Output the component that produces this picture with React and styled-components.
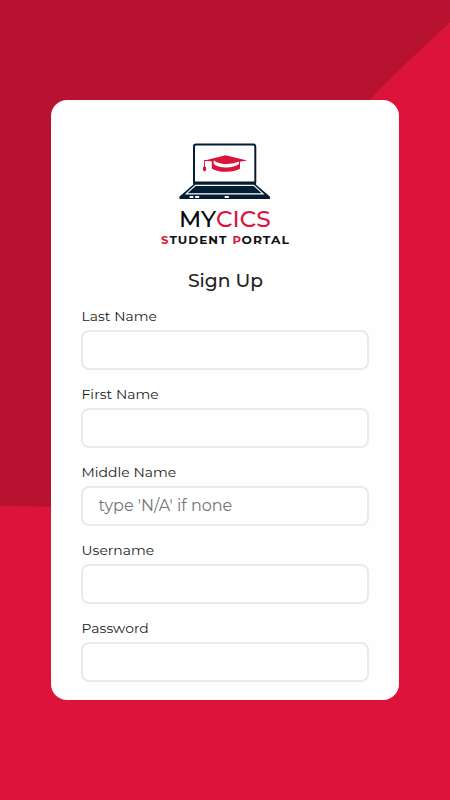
import React from "react";
import styled, { createGlobalStyle } from "styled-components";

const GlobalStyle = createGlobalStyle`
  * { box-sizing: border-box; }
  body { margin: 0; background: #dc143c; font-family: Montserrat, Inter, sans-serif; }
`;

const Page = styled.main`
  position: relative;
  height: 800px;
  overflow: hidden;
  display: flex;
  align-items: center;
  justify-content: center;
  background: #dc143c;
`;

const Backdrop = styled.svg`
  position: absolute;
  inset: 0;
  width: 450px;
  height: 800px;
`;

const Card = styled.form`
  position: relative;
  width: 348px;
  height: 600px;
  padding: 20px 30px 0;
  overflow: hidden;
  border-radius: 16px;
  background: #fefefe;
`;

const Logo = styled.svg`
  display: block;
  width: 150px;
  height: 150px;
  margin: 0 auto;
  font-family: Montserrat, Inter, sans-serif;
`;

const Title = styled.h3`
  margin: -1px 0 0 1px;
  font-size: 18.72px;
  line-height: 24px;
  font-weight: 550;
  text-align: center;
  color: #222;
`;

const Fields = styled.div`
  display: grid;
  gap: 14px;
  margin-top: 13px;
`;

const Field = styled.label`
  display: flex;
  flex-direction: column;
  height: 64px;
`;

const Caption = styled.span`
  height: 24px;
  padding-left: 0.5px;
  font-size: 13.9px;
  line-height: 21px;
  letter-spacing: 0.05px;
  color: #222;
`;

const Input = styled.input`
  width: 288px;
  height: 40px;
  padding: 0 15px 1px 15.5px;
  border: 2px solid #eaeaea;
  border-radius: 8px;
  outline: none;
  background: #fff;
  font: 400 16px Montserrat, Inter, sans-serif;
  color: #222;
  &::placeholder { color: #757575; opacity: 1; }
`;

const FIELDS = [
  { label: "Last Name" },
  { label: "First Name" },
  { label: "Middle Name", placeholder: "type 'N/A' if none" },
  { label: "Username" },
  { label: "Password", type: "password" },
];

function PortalLogo() {
  return (
    <Logo viewBox="150 120 150 150" role="img" aria-label="MyCICS Student Portal">
      <rect x="194" y="144.4" width="61.3" height="40" rx="2" fill="#fff" stroke="#051d33" strokeWidth="2" />
      <path d="M193.4 181.5h62.5v3l14.2 12.3v1.1q0 1.2-1.4 1.2H180.8q-1.5 0-1.5-1.2v-1.1l14.1-12.3z" fill="#051d33" />
      <path d="M186.2 193.9l9.2-8.5h58.4l9.3 8.5z" fill="none" stroke="#fff" strokeWidth="1.1" />
      <g fill="#fff">
        <rect x="189.6" y="195.9" width="3.7" height="2.2" rx=".5" />
        <rect x="195" y="195.9" width="4.2" height="2.2" rx=".5" />
        <rect x="224.6" y="195.9" width="4.3" height="2.2" rx=".5" />
      </g>
      <g fill="#dc143c">
        <path d="M225.5 155.2L247.2 160.4L240 161.8V168.8Q235 171.8 226 171.8Q217 171.8 211.8 168.7V161.6L204.5 160.4Z" />
        <path d="M204 160.1H212V160.9H204.9V166.2Q206.3 167 206.3 168.8Q206.2 171 204.5 171.4Q202.8 171 202.8 168.8Q202.8 167 204 166.2Z" />
      </g>
      <path d="M213.7 160.2Q219 164.3 226.5 163.9Q234 164 239 161.5V164.1Q234 167.6 226 167.5Q217.5 167.2 213.7 163.9Z" fill="#fff" />
      <text y="227.4" fontSize="23" fontWeight="500" fill="#080808">
        <tspan x="179" textLength="37" lengthAdjust="spacingAndGlyphs">MY</tspan>
        <tspan x="216" textLength="54.8" lengthAdjust="spacingAndGlyphs" fill="#dc143c">CICS</tspan>
      </text>
      <text y="244.1" fontSize="11.6" fontWeight="700" letterSpacing="1" fill="#111">
        <tspan x="160.9" fill="#dc143c">S</tspan>
        <tspan x="169.5" textLength="58" lengthAdjust="spacingAndGlyphs">TUDENT</tspan>
        <tspan x="232.5" fill="#dc143c">P</tspan>
        <tspan x="241.5" textLength="48.5" lengthAdjust="spacingAndGlyphs">ORTAL</tspan>
      </text>
    </Logo>
  );
}

export default function App() {
  return (
    <>
      <GlobalStyle />
      <Page>
        <Backdrop viewBox="0 0 450 800" aria-hidden="true">
          <path d="M0 0H450V22.5Q398 70 369.5 100Q300 190 250 360Q210 520 51 506.7L0 505.7Z" fill="#b71230" />
        </Backdrop>
        <Card>
          <PortalLogo />
          <Title>Sign Up</Title>
          <Fields>
            {FIELDS.map(({ label, type = "text", placeholder }) => (
              <Field key={label}>
                <Caption>{label}</Caption>
                <Input type={type} placeholder={placeholder} />
              </Field>
            ))}
          </Fields>
        </Card>
      </Page>
    </>
  );
}
